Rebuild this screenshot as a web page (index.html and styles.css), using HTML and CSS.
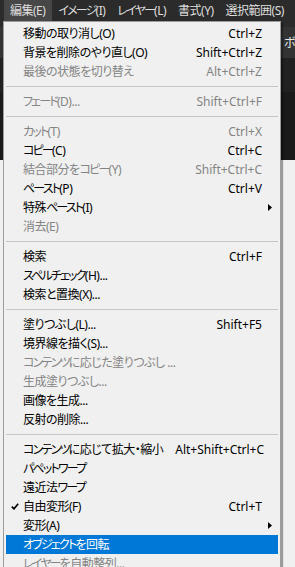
FILE: index.html
```html
<!DOCTYPE html>
<html lang="ja">
<head>
  <meta charset="UTF-8">
  <title>編集メニュー</title>
  <link rel="stylesheet" href="styles.css">
</head>
<body>
  <div class="menubar">
    <span class="mb-item active">編集(E)</span>
    <span class="mb-item"><span class="k">イメージ</span>(I)</span>
    <span class="mb-item"><span class="k">レイヤー</span>(L)</span>
    <span class="mb-item">書式(Y)</span>
    <span class="mb-item">選択範囲(S)</span>
  </div>
  <div class="optbar"><span class="k">ボックス</span></div>
  <div class="band-a"></div>
  <div class="band-b"></div>
  <div class="lower"></div>

  <!-- 編集メニュー (ドロップダウン) -->
  <div class="menu">
    <div class="item"><i></i><span>移動の取り消し(O)</span><em>Ctrl+Z</em><b></b></div>
    <div class="item"><i></i><span>背景を削除のやり直し(O)</span><em>Shift+Ctrl+Z</em><b></b></div>
    <div class="item off"><i></i><span>最後の状態を切り替え</span><em>Alt+Ctrl+Z</em><b></b></div>
    <div class="sep"></div>
    <div class="item off"><i></i><span><span class="k">フェード</span>(D)...</span><em>Shift+Ctrl+F</em><b></b></div>
    <div class="sep"></div>
    <div class="item off"><i></i><span><span class="k">カット</span>(T)</span><em>Ctrl+X</em><b></b></div>
    <div class="item"><i></i><span><span class="k">コピー</span>(C)</span><em>Ctrl+C</em><b></b></div>
    <div class="item off"><i></i><span>結合部分を<span class="k">コピー</span>(Y)</span><em>Shift+Ctrl+C</em><b></b></div>
    <div class="item"><i></i><span><span class="k">ペースト</span>(P)</span><em>Ctrl+V</em><b></b></div>
    <div class="item"><i></i><span>特殊<span class="k">ペースト</span>(I)</span><em></em><b><svg width="4" height="7" viewBox="0 0 4 7"><polygon points="0,0 4,3.5 0,7" fill="#000"/></svg></b></div>
    <div class="item off"><i></i><span>消去(E)</span><em></em><b></b></div>
    <div class="sep"></div>
    <div class="item"><i></i><span>検索</span><em>Ctrl+F</em><b></b></div>
    <div class="item"><i></i><span><span class="k">スペルチェック</span>(H)...</span><em></em><b></b></div>
    <div class="item"><i></i><span>検索と置換(X)...</span><em></em><b></b></div>
    <div class="sep"></div>
    <div class="item"><i></i><span>塗りつぶし(L)...</span><em>Shift+F5</em><b></b></div>
    <div class="item"><i></i><span>境界線を描く(S)...</span><em></em><b></b></div>
    <div class="item off"><i></i><span><span class="k">コンテンツ</span>に応じた塗りつぶし ...</span><em></em><b></b></div>
    <div class="item off"><i></i><span>生成塗りつぶし...</span><em></em><b></b></div>
    <div class="item"><i></i><span>画像を生成...</span><em></em><b></b></div>
    <div class="item"><i></i><span>反射の削除...</span><em></em><b></b></div>
    <div class="sep"></div>
    <div class="item"><i></i><span><span class="k">コンテンツ</span>に応じて拡大・縮小</span><em>Alt+Shift+Ctrl+C</em><b></b></div>
    <div class="item"><i></i><span><span class="k">パペットワープ</span></span><em></em><b></b></div>
    <div class="item"><i></i><span>遠近法<span class="k">ワープ</span></span><em></em><b></b></div>
    <div class="item"><i><svg width="8" height="7" viewBox="0 0 8 7"><path d="M0.8 3.6 L3 5.8 L7.2 0.8" fill="none" stroke="#000" stroke-width="1.7"/></svg></i><span>自由変形(F)</span><em>Ctrl+T</em><b></b></div>
    <div class="item"><i></i><span>変形(A)</span><em></em><b><svg width="4" height="7" viewBox="0 0 4 7"><polygon points="0,0 4,3.5 0,7" fill="#000"/></svg></b></div>
    <div class="item hot"><i></i><span><span class="k">オブジェクト</span>を回転</span><em></em><b></b></div>
    <div class="item off"><i></i><span><span class="k">レイヤー</span>を自動整列...</span><em></em><b></b></div>
  </div>
</body>
</html>
```

FILE: styles.css
```css
*{margin:0;padding:0;box-sizing:border-box;}
body{width:295px;height:567px;overflow:hidden;position:relative;background:#f0f0f0;font-family:"Noto Sans","Noto Sans CJK JP",sans-serif;font-size:12px;font-feature-settings:"palt";}
/* カタカナは詰める */
.k{letter-spacing:-1.8px;}

/* 背面のウィンドウ */
.menubar{height:27px;background:#2b2b2b;display:flex;padding-left:4px;color:#dedede;}
.mb-item{height:21px;line-height:21px;padding:0 6px 0 6px;letter-spacing:-0.5px;white-space:nowrap;}
.mb-item.active{background:#474747;padding-right:7px;}
.optbar{height:31px;background:#333;color:#e8e8e8;padding-left:284px;line-height:31px;white-space:nowrap;overflow:hidden;}
.band-a{height:34px;background:#212121;}
.band-b{height:68px;background:#1a1a1a;}
.lower{height:407px;background:#f0f0f0;}

/* メニュー */
.menu{position:absolute;left:3px;top:21px;width:278px;background:#f0f0f0;border:1px solid #9c9c9c;padding:2px 0 4px;box-shadow:2px 2px 1px rgba(0,0,0,.35);color:#000;}
.item{display:grid;grid-template-columns:17px 1fr auto 16px;align-items:center;height:19px;line-height:19px;margin:0 2px;white-space:nowrap;}
.item > span{letter-spacing:-0.5px;}
.item i{display:flex;justify-content:center;align-items:center;}
.item em{font-style:normal;text-align:right;padding-left:12px;}
.item b{display:flex;justify-content:center;align-items:center;}
.item.off{color:#848484;}
.item.hot{background:#0078d7;color:#fff;}
.sep{height:0;margin:5px 2px;border-top:1px solid #c6c6c6;}
```
